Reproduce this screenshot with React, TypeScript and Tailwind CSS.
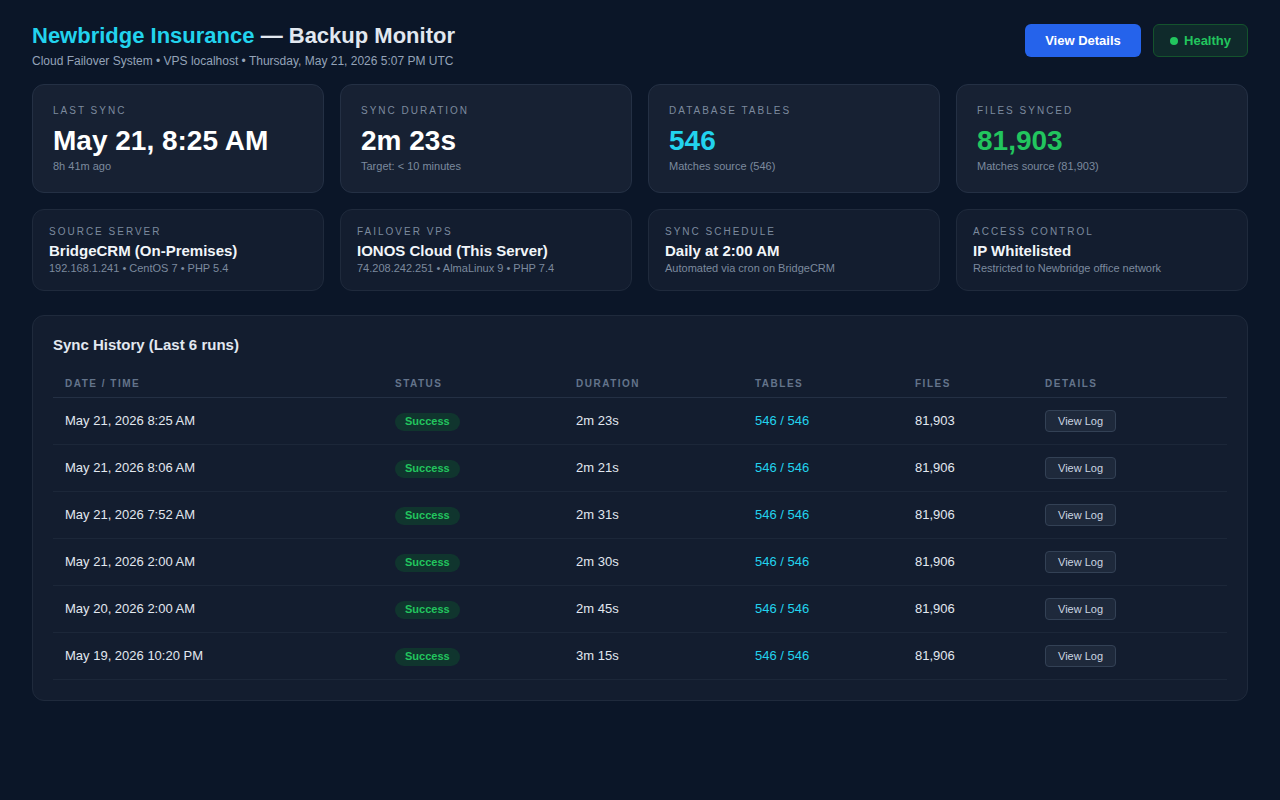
import React from "react";

const STATS = [
  { label: "Last Sync", value: "May 21, 8:25 AM", sub: "8h 41m ago", color: "text-white" },
  { label: "Sync Duration", value: "2m 23s", sub: "Target: < 10 minutes", color: "text-white" },
  { label: "Database Tables", value: "546", sub: "Matches source (546)", color: "text-[#22d3ee]" },
  { label: "Files Synced", value: "81,903", sub: "Matches source (81,903)", color: "text-[#22c55e]" },
];

const INFO = [
  { label: "Source Server", title: "BridgeCRM (On-Premises)", sub: "192.168.1.241 • CentOS 7 • PHP 5.4" },
  { label: "Failover VPS", title: "IONOS Cloud (This Server)", sub: "74.208.242.251 • AlmaLinux 9 • PHP 7.4" },
  { label: "Sync Schedule", title: "Daily at 2:00 AM", sub: "Automated via cron on BridgeCRM" },
  { label: "Access Control", title: "IP Whitelisted", sub: "Restricted to Newbridge office network" },
];

const RUNS = [
  { date: "May 21, 2026 8:25 AM", duration: "2m 23s", files: "81,903" },
  { date: "May 21, 2026 8:06 AM", duration: "2m 21s", files: "81,906" },
  { date: "May 21, 2026 7:52 AM", duration: "2m 31s", files: "81,906" },
  { date: "May 21, 2026 2:00 AM", duration: "2m 30s", files: "81,906" },
  { date: "May 20, 2026 2:00 AM", duration: "2m 45s", files: "81,906" },
  { date: "May 19, 2026 10:20 PM", duration: "3m 15s", files: "81,906" },
];

const COLS = "grid grid-cols-[330px_181px_179px_160px_130px_1fr]";

const App = () => {
  return (
    <div className="min-h-screen bg-[#0b1628] px-8 pt-6 pb-10 font-['Liberation_Sans',Arial,sans-serif] text-[#e2e8f0]">
      {/* header */}
      <div className="flex items-start justify-between">
        <div>
          <h1 className="text-[22px] font-bold leading-[24px] text-[#e2e8f0]">
            <span className="text-[#22d3ee]">Newbridge Insurance</span> — Backup Monitor
          </h1>
          <p className="mt-[6px] text-[12px] leading-[14px] text-[#94a3b8]">
            Cloud Failover System • VPS localhost • Thursday, May 21, 2026 5:07 PM UTC
          </p>
        </div>
        <div className="flex items-center gap-3">
          <button className="h-[33px] w-[116px] rounded-md bg-[#2563eb] text-[13px] font-bold text-white">
            View Details
          </button>
          <div className="flex h-[33px] w-[95px] items-center justify-center gap-[6px] rounded-md border border-[#14532d] bg-[#0f2a2b] text-[13px] font-bold text-[#22c55e]">
            <span className="size-2 rounded-full bg-[#22c55e]" />
            Healthy
          </div>
        </div>
      </div>

      {/* stat cards */}
      <div className="mt-[16px] grid grid-cols-4 gap-4">
        {STATS.map((s) => (
          <div
            key={s.label}
            className="h-[109px] rounded-xl border border-[#243044] bg-[#172133] px-5 pt-[20px]"
          >
            <div className="text-[10px] uppercase leading-3 tracking-[0.2em] text-[#7c8a9e]">{s.label}</div>
            <div className={`mt-[8px] text-[28px] font-bold leading-[32px] ${s.color}`}>{s.value}</div>
            <div className="mt-[3px] text-[11px] leading-[13px] text-[#7c8a9e]">{s.sub}</div>
          </div>
        ))}
      </div>

      {/* info cards */}
      <div className="mt-4 grid grid-cols-4 gap-4">
        {INFO.map((i) => (
          <div
            key={i.label}
            className="h-[82px] rounded-xl border border-[#1f2a3c] bg-[#131d2f] px-4 pt-[16px]"
          >
            <div className="text-[10px] uppercase leading-3 tracking-[0.2em] text-[#7c8a9e]">{i.label}</div>
            <div className="mt-[4px] text-[15px] font-bold leading-[18px] text-[#f1f5f9]">{i.title}</div>
            <div className="mt-[2px] text-[11px] leading-[13px] text-[#7c8a9e]">{i.sub}</div>
          </div>
        ))}
      </div>

      {/* history */}
      <div className="mt-6 rounded-xl border border-[#1f2a3c] bg-[#131d2f] px-5 pt-[20px] pb-5">
        <h2 className="text-[15px] font-bold leading-[18px] text-[#e2e8f0]">Sync History (Last 6 runs)</h2>
        <div className="mt-[15px]">
          <div className={`${COLS} h-[29px] items-center border-b border-[#243044] px-3 text-[10px] font-bold uppercase tracking-[0.15em] text-[#64748b]`}>
            <div>Date / Time</div>
            <div>Status</div>
            <div>Duration</div>
            <div>Tables</div>
            <div>Files</div>
            <div>Details</div>
          </div>
          {RUNS.map((r) => (
            <div
              key={r.date}
              className={`${COLS} h-[47px] items-center border-b border-[#1c2739] px-3 text-[13px] text-[#e2e8f0]`}
            >
              <div>{r.date}</div>
              <div>
                <span className="inline-flex h-[18px] items-center rounded-full bg-[#10352e] px-[10px] text-[11px] font-bold text-[#22c55e]">
                  Success
                </span>
              </div>
              <div>{r.duration}</div>
              <div className="text-[#22d3ee]">546 / 546</div>
              <div>{r.files}</div>
              <div>
                <button className="h-[22px] rounded border border-[#334155] bg-[#1e293b] px-3 text-[11px] text-[#cbd5e1]">
                  View Log
                </button>
              </div>
            </div>
          ))}
        </div>
      </div>
    </div>
  );
};

export default App;
